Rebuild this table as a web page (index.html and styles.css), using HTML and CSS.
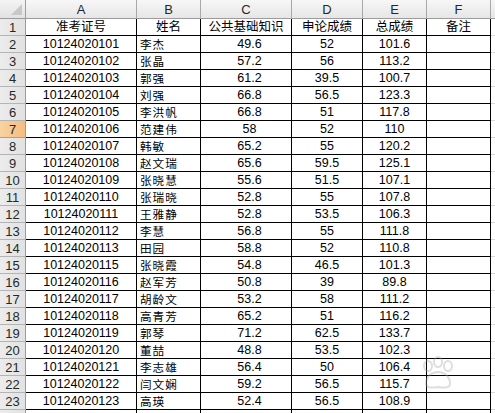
FILE: index.html
```html
<!DOCTYPE html>
<html lang="zh">
<head>
<meta charset="utf-8">
<title>成绩表</title>
<link rel="stylesheet" href="styles.css">
</head>
<body>
<div class="sheet">
  <div class="corner"><span class="tri"></span></div>
  <div class="colhead">A</div>
  <div class="colhead">B</div>
  <div class="colhead">C</div>
  <div class="colhead">D</div>
  <div class="colhead">E</div>
  <div class="colhead">F</div>
  <div class="colhead last"></div>

  <div class="rowhead">1</div>
  <div class="cell c">准考证号</div>
  <div class="cell c">姓名</div>
  <div class="cell c">公共基础知识</div>
  <div class="cell c">申论成绩</div>
  <div class="cell c">总成绩</div>
  <div class="cell c">备注</div>
  <div class="gcell"></div>
</div>
<div class="sheet body" id="rows"></div>
<svg class="watermark" width="40" height="34" viewBox="0 0 40 34" aria-hidden="true">
  <g fill="none" stroke="rgba(160,160,160,0.35)" stroke-width="2">
    <ellipse cx="10" cy="10" rx="4" ry="5"/>
    <ellipse cx="20" cy="6" rx="4" ry="5"/>
    <ellipse cx="30" cy="10" rx="4" ry="5"/>
    <path d="M8 28 C8 20 14 16 20 16 C26 16 32 20 32 28 C32 32 26 32 20 31 C14 32 8 32 8 28 Z"/>
  </g>
</svg>
<script src="script.js"></script>
</body>
</html>
```

FILE: styles.css
```css
* { box-sizing: border-box; }
html, body { margin: 0; padding: 0; background: #ffffff; overflow: hidden; }
body { width: 495px; height: 413px; position: relative; font-family: "Liberation Sans", "Noto Sans CJK SC", sans-serif; font-size: 12.5px; color: #000; }

.sheet {
  display: grid;
  grid-template-columns: 26px 111px 64px 91px 71px 64px 64px 4px;
  grid-auto-rows: 17px;
}
.sheet:first-child { grid-template-rows: 19px 17px; }

.corner {
  background: linear-gradient(#f4f4f4, #e2e2e2);
  border-right: 1px solid #9c9c9c;
  border-bottom: 1px solid #9c9c9c;
  position: relative;
}
.tri {
  position: absolute; right: 3px; bottom: 3px;
  width: 0; height: 0;
  border-left: 11px solid transparent;
  border-bottom: 11px solid #c8c8c8;
}
.colhead {
  background: linear-gradient(#f7f7f7, #e6e6e6);
  border-right: 1px solid #a8a8a8;
  border-bottom: 1px solid #9c9c9c;
  display: flex; align-items: center; justify-content: center;
  font-size: 13px; line-height: 15px; color: #1e2a2a;
  padding-top: 1px;
}
.colhead.last { border-right: none; }

.rowhead {
  background: linear-gradient(90deg, #ececec, #e2e2e2);
  border-right: 1px solid #9c9c9c;
  border-bottom: 1px solid #b4b4b4;
  display: flex; align-items: center; justify-content: center;
  font-size: 13px; line-height: 15px; color: #1e2a2a;
}
.rowhead.sel {
  background: linear-gradient(90deg, #f9d3a0, #f4bd80);
  border-bottom-color: #c99a66;
}
.cell {
  border-right: 1px solid #000;
  border-bottom: 1px solid #000;
  display: flex; align-items: center;
  white-space: nowrap; overflow: hidden;
  font-family: "Liberation Sans", "Noto Sans CJK SC", sans-serif;
  line-height: 15px;
  padding-top: 1px;
}
.cell.c { justify-content: center; }
.cell.l { padding-left: 3px; font-family: "Noto Sans CJK SC", sans-serif; font-size: 11.6px; letter-spacing: 1px; }
.cell.num { justify-content: center; padding-left: 7px; }
.gcell { border-bottom: 1px solid #d0d7e5; }

.watermark {
  position: absolute; left: 418px; top: 356px;
  pointer-events: none;
}
```

FILE: script.js
```js
var data = [
["10124020101","李杰","49.6","52","101.6"],
["10124020102","张晶","57.2","56","113.2"],
["10124020103","郭强","61.2","39.5","100.7"],
["10124020104","刘强","66.8","56.5","123.3"],
["10124020105","李洪帆","66.8","51","117.8"],
["10124020106","范建伟","58","52","110"],
["10124020107","韩敏","65.2","55","120.2"],
["10124020108","赵文瑞","65.6","59.5","125.1"],
["10124020109","张晓慧","55.6","51.5","107.1"],
["10124020110","张瑞晓","52.8","55","107.8"],
["10124020111","王雅静","52.8","53.5","106.3"],
["10124020112","李慧","56.8","55","111.8"],
["10124020113","田园","58.8","52","110.8"],
["10124020115","张晓霞","54.8","46.5","101.3"],
["10124020116","赵军芳","50.8","39","89.8"],
["10124020117","胡龄文","53.2","58","111.2"],
["10124020118","高青芳","65.2","51","116.2"],
["10124020119","郭琴","71.2","62.5","133.7"],
["10124020120","董喆","48.8","53.5","102.3"],
["10124020121","李志雄","56.4","50","106.4"],
["10124020122","闫文娴","59.2","56.5","115.7"],
["10124020123","高瑛","52.4","56.5","108.9"],
["","","","",""]
];
var root = document.getElementById('rows');
var html = '';
data.forEach(function (r, i) {
  var n = i + 2;
  html += '<div class="rowhead' + (n === 7 ? ' sel' : '') + '">' + (n === 24 ? '' : n) + '</div>';
  html += '<div class="cell c">' + r[0] + '</div>';
  html += '<div class="cell l">' + r[1] + '</div>';
  html += '<div class="cell num">' + r[2] + '</div>';
  html += '<div class="cell c">' + r[3] + '</div>';
  html += '<div class="cell c">' + r[4] + '</div>';
  html += '<div class="cell c"></div>';
  html += '<div class="gcell"></div>';
});
root.innerHTML = html;
```
